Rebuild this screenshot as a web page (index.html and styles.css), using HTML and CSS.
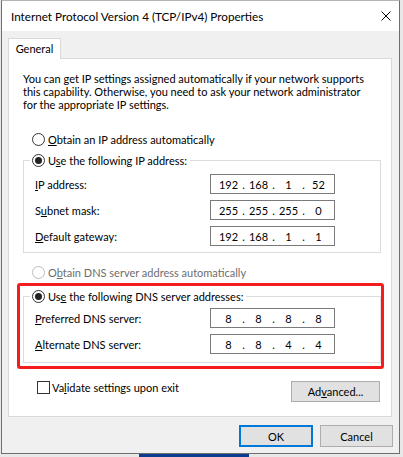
FILE: index.html
```html
<!DOCTYPE html>
<html lang="en">
<head>
<meta charset="utf-8">
<title>Internet Protocol Version 4 (TCP/IPv4) Properties</title>
<link rel="stylesheet" href="styles.css">
</head>
<body>
<div class="screen">
  <div class="window">
    <div class="titlebar">
      <span class="title">Internet Protocol Version 4 (TCP/IPv4) Properties</span>
      <svg class="close" width="10" height="10" viewBox="0 0 10 10" aria-label="Close"><path d="M0.5 0.5 L9.5 9.5 M9.5 0.5 L0.5 9.5" stroke="#000" stroke-width="1" fill="none"/></svg>
    </div>
    <div class="body">
      <div class="tabs"><div class="tab">General</div></div>
      <div class="panel">
        <p class="intro">You can get IP settings assigned automatically if your network supports<br>this capability. Otherwise, you need to ask your network administrator<br>for the appropriate IP settings.</p>

        <div class="radio-row r1"><span class="radio"></span><span><u>O</u>btain an IP address automatically</span></div>

        <div class="group g1">
          <div class="legend"><span class="radio checked"></span><span>U<u>s</u>e the following IP address:</span></div>
          <div class="rows rows-ip">
            <div class="field-row"><span class="label"><u>I</u>P address:</span><div class="ip"><span>192</span><i>.</i><span>168</span><i>.</i><span>1</span><i>.</i><span>52</span></div></div>
            <div class="field-row"><span class="label">S<u>u</u>bnet mask:</span><div class="ip"><span>255</span><i>.</i><span>255</span><i>.</i><span>255</span><i>.</i><span>0</span></div></div>
            <div class="field-row"><span class="label"><u>D</u>efault gateway:</span><div class="ip"><span>192</span><i>.</i><span>168</span><i>.</i><span>1</span><i>.</i><span>1</span></div></div>
          </div>
        </div>

        <div class="radio-row r2 disabled"><span class="radio"></span><span>O<u>b</u>tain DNS server address automatically</span></div>

        <div class="group g2">
          <div class="legend"><span class="radio checked"></span><span>Us<u>e</u> the following DNS server addresses:</span></div>
          <div class="rows rows-dns">
            <div class="field-row"><span class="label"><u>P</u>referred DNS server:</span><div class="ip"><span>8</span><i>.</i><span>8</span><i>.</i><span>8</span><i>.</i><span>8</span></div></div>
            <div class="field-row"><span class="label"><u>A</u>lternate DNS server:</span><div class="ip"><span>8</span><i>.</i><span>8</span><i>.</i><span>4</span><i>.</i><span>4</span></div></div>
          </div>
        </div>

        <div class="check-row">
          <div class="check-label"><span class="checkbox"></span><span>Va<u>l</u>idate settings upon exit</span></div>
          <div class="btn adv">Ad<u>v</u>anced...</div>
        </div>

        <div class="highlight"></div>
      </div>
      <div class="actions">
        <div class="btn ok">OK</div>
        <div class="btn cancel">Cancel</div>
      </div>
    </div>
  </div>
  <div class="strip"></div>
</div>
</body>
</html>
```
FILE: styles.css
```css
* { box-sizing: border-box; margin: 0; padding: 0; }
html, body { width: 403px; height: 457px; overflow: hidden; }
body {
  font-family: Lato, "Liberation Sans", Arial, sans-serif;
  font-size: 11px;
  color: #000;
  background: #e8e8e8;
  white-space: nowrap;
}
u { text-decoration: underline; text-underline-offset: 1px; }

.screen {
  width: 403px;
  height: 457px;
  padding-left: 1px;
  background: #e8e8e8;
}

.window {
  width: 399px;
  height: 454px;
  border: 1px solid #6e6e6e;
  border-top-color: #b4b4b4;
  background: #f0f0f0;
  display: flex;
  flex-direction: column;
}

.titlebar {
  height: 30px;
  flex: none;
  background: #fff;
  display: flex;
  align-items: center;
  justify-content: space-between;
  padding: 0 8px 0 9px;
}
.title { font-size: 11.7px; line-height: 16px; }
.close { display: block; }

.body { padding: 7px 6px 0 6px; }

.tabs { display: flex; }
.tab {
  position: relative;
  z-index: 1;
  width: 53px;
  height: 21px;
  margin-bottom: -1px;
  border: 1px solid #d9d9d9;
  border-bottom: none;
  background: #fff;
  text-align: center;
  line-height: 19px;
}

.panel {
  position: relative;
  width: 384px;
  background: #fff;
  border: 1px solid #d9d9d9;
  padding: 13px 10px 14px 14px;
}

.intro { line-height: 13px; }

.radio-row {
  display: flex;
  align-items: center;
  gap: 3px;
  height: 13px;
  line-height: 13px;
  margin-left: 9px;
}
.r1 { margin-top: 22px; }
.r2 { margin-top: 13px; }
.disabled { color: #6d6d6d; }

.radio {
  width: 13px;
  height: 13px;
  flex: none;
  border: 1px solid #333;
  border-radius: 50%;
  background: #fff;
  display: flex;
  align-items: center;
  justify-content: center;
}
.disabled .radio { border-color: #bcbcbc; }
.radio.checked::after {
  content: "";
  width: 7px;
  height: 7px;
  border-radius: 50%;
  background: #222;
}

.group {
  width: 358px;
  border: 1px solid #dcdcdc;
  padding: 0 0 6px 11px;
}
.g1 { margin-top: 14px; }
.g2 { margin-top: 17px; padding-bottom: 8px; }

.legend {
  display: flex;
  align-items: center;
  gap: 3px;
  width: max-content;
  height: 13px;
  line-height: 13px;
  margin: -7px 0 0 -5px;
  padding: 0 3px 0 2px;
  background: #fff;
}

.rows-ip { margin-top: 7px; }
.rows-dns { margin-top: 5px; }

.field-row {
  display: flex;
  align-items: center;
  height: 20px;
}
.field-row + .field-row { margin-top: 6px; }
.label { width: 175px; flex: none; }

.ip {
  width: 125px;
  height: 20px;
  border: 1px solid #7a7a7a;
  background: #fff;
  display: flex;
  align-items: center;
  padding-left: 6px;
}
.ip span { width: 23px; text-align: center; }
.ip i { width: 7px; text-align: center; font-style: normal; }

.check-row {
  margin-top: 18px;
  display: flex;
  justify-content: space-between;
  align-items: flex-start;
}
.check-label {
  display: flex;
  align-items: center;
  gap: 2px;
  height: 13px;
  line-height: 13px;
  margin-left: 14px;
}
.checkbox {
  width: 13px;
  height: 13px;
  flex: none;
  border: 1px solid #333;
  background: #fff;
}

.btn {
  display: flex;
  align-items: center;
  justify-content: center;
  background: #e1e1e1;
  border: 1px solid #adadad;
}
.adv { width: 89px; height: 21px; margin-right: 1px; }

.highlight {
  position: absolute;
  left: 8px;
  top: 224px;
  width: 367px;
  height: 86px;
  border: 3px solid #f41c1c;
  border-radius: 3px;
}

.actions {
  margin-top: 8px;
  display: flex;
  justify-content: flex-end;
  gap: 7px;
}
.ok { width: 74px; height: 22px; border: 2px solid #0078d7; }
.cancel { width: 73px; height: 22px; }

.strip {
  width: 110px;
  height: 3px;
  margin-left: 138px;
  background: #0b3d8f;
}
```
